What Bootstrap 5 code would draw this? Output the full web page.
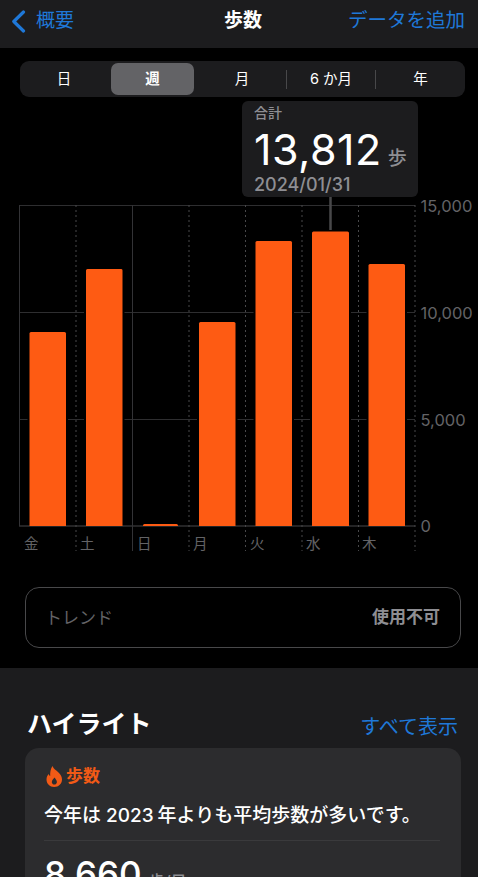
<!DOCTYPE html>
<html lang="ja">
<head>
<meta charset="utf-8">
<title>歩数</title>
<link href="https://cdn.jsdelivr.net/npm/bootstrap@5.3.0/dist/css/bootstrap.min.css" rel="stylesheet">
<style>
html, body { height: 877px; overflow: hidden; }
body { background: #000; color: #fff; font-family: Inter, "Noto Sans CJK JP", sans-serif; }
.topbar { height: 48px; background: #1c1c1e; padding: 0 13px 6px 11px; position: relative; }
.backlink { color: #1f78d8; font-size: 19px; gap: 10px; text-decoration: none; }
.toptitle { font-size: 19px; font-weight: 700; position: absolute; left: 0; right: 0; text-align: center; padding-left: 8px; }
.addlink { color: #1f78d8; font-size: 19.5px; text-decoration: none; }
.segbar { height: 36px; margin: 13px 13px 0 20px; background: #1c1c1e; border-radius: 9px; }
.segitem { height: 31.5px; font-size: 14.5px; font-weight: 400; position: relative; }
.segitem.on { background: #636366; border-radius: 7px; font-weight: 600; }
.segmonth { width: 92px; padding-left: 4px; }
.segsep { width: 1px; height: 19px; background: #48484a; flex: none; }
.chartarea { position: relative; height: 470px; margin-top: 4px; }
.chartsvg { display: block; }
.axislabel { fill: #636366; font-size: 16.5px; font-family: Inter, "Noto Sans CJK JP", sans-serif; }
.daylabel { fill: #636366; font-size: 14.5px; font-family: "Noto Sans CJK JP", sans-serif; }
.tipbox { position: absolute; left: 242px; top: 0; width: 176px; height: 96px; background: #1c1c1e; border-radius: 6px; padding: 2px 12px; }
.tiplabel { color: #8e8e93; font-size: 14px; line-height: 20px; height: 20px; font-weight: 500; }
.tipvalue { font-size: 43px; line-height: 52px; height: 52px; font-weight: 400; letter-spacing: .5px; white-space: nowrap; }
.tipunit { color: #8e8e93; font-size: 19px; font-weight: 500; margin-left: 6px; letter-spacing: 0; }
.tipdate { color: #8e8e93; font-size: 18px; line-height: 20px; height: 20px; font-weight: 500; }
.trendbox { height: 61px; margin: 15.5px 17px 0 25px; border: 1px solid #48484a; border-radius: 14px; padding: 0 20px 0 19px; }
.trendname { color: #636366; font-size: 17px; padding-top: 3px; }
.trendstate { color: #8e8e93; font-size: 17px; font-weight: 600; padding-top: 1px; }
.lowersec { background: #1c1c1e; margin-top: 20.5px; padding: 37px 17px 0 25px; height: 300px; }
.sechead { height: 38px; padding: 0 3px 0 2px; }
.sectitle { font-size: 25px; font-weight: 700; line-height: 34px; }
.seclink { color: #1f78d8; font-size: 20px; line-height: 34px; font-weight: 400; text-decoration: none; padding-top: 6px; }
.hlcard { background: #2c2c2e; border: 0; border-radius: 14px; margin-top: 5px; padding: 17px 21px 0 19px; color: #fff; }
.hltag { color: #f25a16; font-size: 17px; font-weight: 700; gap: 3px; line-height: 22px; padding-left: 2px; }
.hltext { font-size: 19px; font-weight: 500; line-height: 26px; margin-top: 16px; white-space: nowrap; }
.numgap { margin: 0 4px 0 5px; }
.hlrule { border-top: 1px solid #3a3a3c; margin-top: 11px; }
.hlvalue { font-size: 35px; font-weight: 500; line-height: 42px; margin-top: 12px; white-space: nowrap; }
.hlunit { color: #8e8e93; font-size: 16px; font-weight: 500; margin-left: 7px; }
</style>
</head>
<body>
<header class="topbar d-flex align-items-center justify-content-between">
  <span class="toptitle">歩数</span>
  <a class="backlink d-flex align-items-center position-relative" href="#">
    <svg width="15" height="23" viewBox="0 0 15 23" aria-hidden="true"><polyline points="12.5,2 2.8,11.5 12.5,21" fill="none" stroke="#1f78d8" stroke-width="3.2" stroke-linecap="round" stroke-linejoin="round"/></svg>
    <span>概要</span>
  </a>
  <a class="addlink position-relative" href="#">データを追加</a>
</header>

<div class="segbar d-flex align-items-center text-center">
  <div class="segitem d-flex align-items-center justify-content-center" style="width:88px">日</div>
  <div class="segitem on d-flex align-items-center justify-content-center" style="width:83px;margin-left:3px">週</div>
  <div class="segitem segmonth d-flex align-items-center justify-content-center">月</div>
  <div class="segsep"></div>
  <div class="segitem d-flex align-items-center justify-content-center" style="width:88px">6 か月</div>
  <div class="segsep"></div>
  <div class="segitem d-flex align-items-center justify-content-center flex-fill">年</div>
</div>

<div class="chartarea">
  <svg class="chartsvg" width="478" height="470" viewBox="0 101 478 470">
    <g stroke="#2e2e30" stroke-width="1">
      <line x1="19" y1="205.5" x2="415" y2="205.5"/>
      <line x1="19" y1="312.5" x2="415" y2="312.5"/>
      <line x1="19" y1="419.5" x2="415" y2="419.5"/>
      <line x1="19" y1="526" x2="415" y2="526" stroke="#48484a"/>
    </g>
    <g fill="#000">
      <rect x="27.5" y="330" width="40.5" height="195"/>
      <rect x="84" y="267" width="40.5" height="258"/>
      <rect x="197" y="320" width="40.5" height="205"/>
      <rect x="253.5" y="239" width="40.5" height="286"/>
      <rect x="310" y="229.5" width="41" height="295.5"/>
      <rect x="366.5" y="262" width="40.5" height="263"/>
    </g>
    <g stroke="#333336" stroke-width="1">
      <line x1="19.5" y1="205" x2="19.5" y2="526"/>
      <line x1="132.5" y1="205" x2="132.5" y2="551"/>
    </g>
    <g stroke="#48484a" stroke-width="1" stroke-dasharray="2 3">
      <line x1="76" y1="205" x2="76" y2="551"/>
      <line x1="189" y1="205" x2="189" y2="551"/>
      <line x1="245.5" y1="205" x2="245.5" y2="551"/>
      <line x1="302" y1="205" x2="302" y2="551"/>
      <line x1="358.5" y1="205" x2="358.5" y2="551"/>
      <line x1="415" y1="205" x2="415" y2="551"/>
    </g>
    <g fill="#fe5b13">
      <path d="M29.5 526V333.500a1.500 1.500 0 0 1 1.500-1.500h33.500a1.500 1.500 0 0 1 1.500 1.500V526z"/>
      <path d="M86 526V270.500a1.500 1.500 0 0 1 1.500-1.500h33.500a1.500 1.500 0 0 1 1.500 1.500V526z"/>
      <path d="M143 526V525.500a1.500 1.500 0 0 1 1.500-1.500h32a1.500 1.500 0 0 1 1.500 1.500V526z"/>
      <path d="M199 526V323.500a1.500 1.500 0 0 1 1.500-1.500h33.500a1.500 1.500 0 0 1 1.500 1.500V526z"/>
      <path d="M255.500 526V242.500a1.500 1.500 0 0 1 1.500-1.500h33.500a1.500 1.500 0 0 1 1.500 1.500V526z"/>
      <path d="M312 526V233a1.500 1.500 0 0 1 1.500-1.500h34a1.500 1.500 0 0 1 1.500 1.500V526z"/>
      <path d="M368.500 526V265.500a1.500 1.500 0 0 1 1.500-1.500h33.500a1.500 1.500 0 0 1 1.500 1.500V526z"/>
    </g>
    <line x1="330.500" y1="196" x2="330.500" y2="230" stroke="#48484a" stroke-width="2.500"/>
    <text class="axislabel" x="420.500" y="212">15,000</text>
    <text class="axislabel" x="420.500" y="319">10,000</text>
    <text class="axislabel" x="420.500" y="426">5,000</text>
    <text class="axislabel" x="420.500" y="532">0</text>
    <text class="daylabel" x="24" y="549">金</text>
    <text class="daylabel" x="80" y="549">土</text>
    <text class="daylabel" x="137" y="549">日</text>
    <text class="daylabel" x="193" y="549">月</text>
    <text class="daylabel" x="250" y="549">火</text>
    <text class="daylabel" x="306" y="549">水</text>
    <text class="daylabel" x="362" y="549">木</text>
  </svg>
  <div class="tipbox">
    <div class="tiplabel">合計</div>
    <div class="tipvalue">13,812<span class="tipunit">歩</span></div>
    <div class="tipdate">2024/01/31</div>
  </div>
</div>

<div class="trendbox d-flex align-items-center justify-content-between">
  <span class="trendname">トレンド</span>
  <span class="trendstate">使用不可</span>
</div>

<section class="lowersec">
  <div class="d-flex align-items-center justify-content-between sechead">
    <span class="sectitle">ハイライト</span>
    <a class="seclink" href="#">すべて表示</a>
  </div>
  <div class="card hlcard">
    <div class="hltag d-flex align-items-center">
      <svg width="17" height="21" viewBox="0 0 17 21" aria-hidden="true"><path fill="#f25a16" fill-rule="evenodd" d="M6.500 0C7.500 3 10 4 12.500 6.500C15 9 16 11 16 13.500C16 17.800 12.600 21 8.200 21C3.800 21 .5 17.800 .5 13.500C.5 11 1.500 9.300 2.800 8C3 9 3.500 9.800 4.200 10C4 6.500 4.500 3 6.500 0ZM8.500 11.500C7.600 13 5.800 14 5.800 16C5.800 17.500 6.900 18.600 8.300 18.600C9.800 18.600 10.900 17.500 10.900 16C10.900 14.200 9.500 13 8.500 11.500Z"/></svg>
      <span>歩数</span>
    </div>
    <div class="hltext">今年は<span class="numgap">2023</span>年よりも平均歩数が多いです。</div>
    <div class="hlrule"></div>
    <div class="hlvalue">8,660<span class="hlunit">歩/日</span></div>
  </div>
</section>
</body>
</html>
